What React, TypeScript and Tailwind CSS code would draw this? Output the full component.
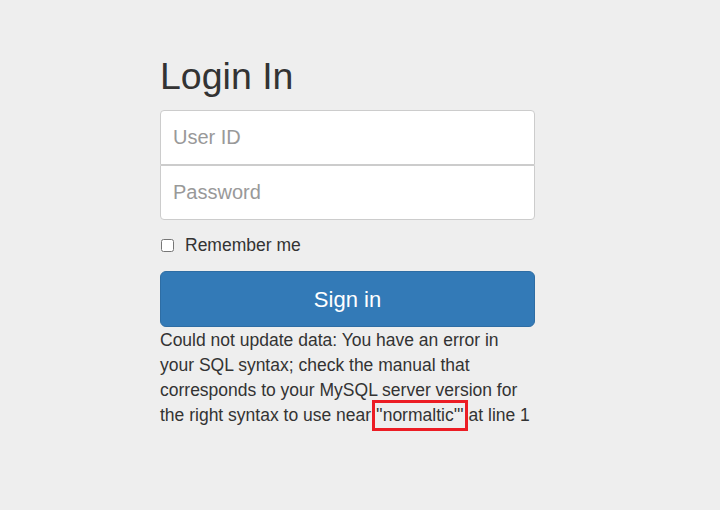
export default function App() {
  return (
    <div className="min-h-[510px] w-full bg-[#eeeeee] font-['Liberation_Sans',Arial,sans-serif] text-[#333333]">
      <div className="pl-[160px] pt-[56px]">
        <form className="flex w-[375px] flex-col" onSubmit={(e) => e.preventDefault()}>
          <h2 className="mb-[13px] text-[37.5px] font-normal leading-[41px]">Login In</h2>

          <input
            type="text"
            placeholder="User ID"
            className="h-[55px] w-full rounded-t-[4px] border border-[#cccccc] bg-white px-[12px] text-[20px] text-[#555] placeholder:text-[#999999] focus:outline-none"
          />
          <input
            type="password"
            placeholder="Password"
            className="h-[55px] w-full rounded-b-[4px] border border-[#cccccc] bg-white px-[12px] text-[20px] text-[#555] placeholder:text-[#999999] focus:outline-none"
          />

          <label className="mt-[12px] flex h-[26px] items-center gap-[11px] text-[17.5px]">
            <input type="checkbox" className="ml-[1px] h-[13px] w-[13px]" />
            Remember me
          </label>

          <button
            type="submit"
            className="mt-[13px] h-[56px] w-full rounded-[6px] border border-[#2e6da4] bg-[#337ab7] text-[22px] text-white"
          >
            Sign in
          </button>

          <p className="mt-[1px] text-[17.5px] leading-[25px]">
            Could not update data: You have an error in your SQL syntax; check the manual that
            corresponds to your MySQL server version for the right syntax to use near{" "}
            <span className="relative">
              ''normaltic'''
              <span className="pointer-events-none absolute -left-[4px] -right-[4px] -top-[5px] -bottom-[6px] border-[3px] border-[#ec1c24]" />
            </span>{" "}
            at line 1
          </p>
        </form>
      </div>
    </div>
  )
}
